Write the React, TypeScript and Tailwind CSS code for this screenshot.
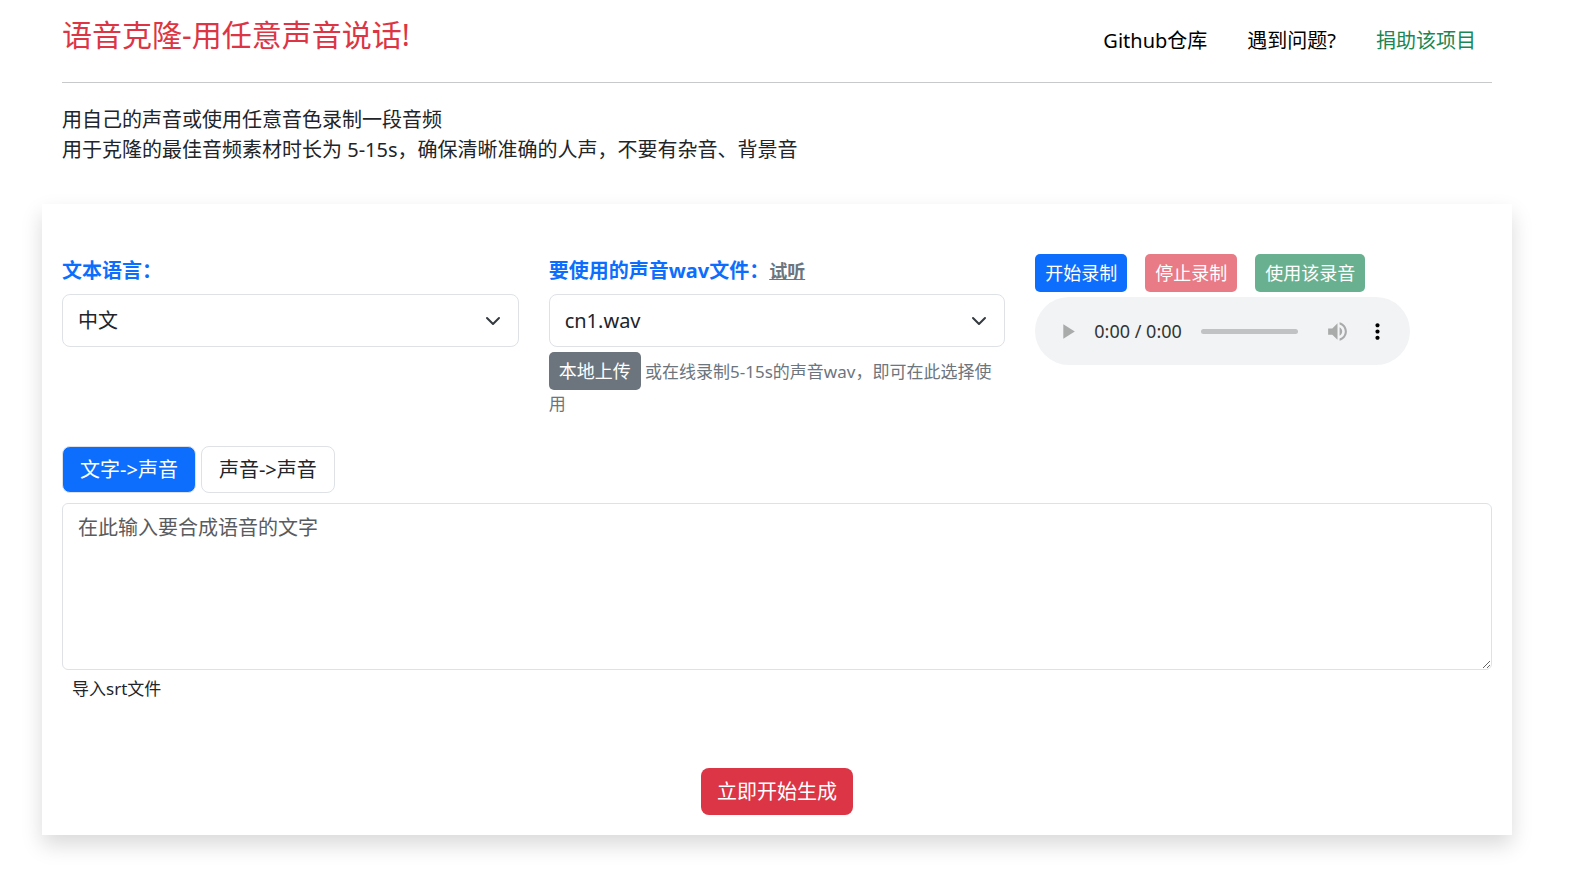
import { useState, ReactNode } from 'react';

interface SmallButtonProps {
  color: string;
  disabled?: boolean;
  children: ReactNode;
}

const links = [
  { label: 'Github仓库', color: 'text-black' },
  { label: '遇到问题?', color: 'text-black' },
  { label: '捐助该项目', color: 'text-[#198754]' },
];

const modes = [
  { id: 'tts', label: '文字->声音' },
  { id: 'sts', label: '声音->声音' },
];

const SmallButton = ({ color, disabled, children }: SmallButtonProps) => (
  <button
    type="button"
    disabled={disabled}
    className={`inline-block h-[38px] rounded-[5px] px-[10px] text-lg leading-[38px] text-white disabled:opacity-65 ${color}`}
  >
    {children}
  </button>
);

const Chevron = () => (
  <svg
    viewBox="0 0 16 16"
    className="pointer-events-none absolute top-1/2 right-[18px] size-4 -translate-y-1/2"
    fill="none"
    stroke="#343a40"
    strokeWidth="2"
    strokeLinecap="round"
    strokeLinejoin="round"
  >
    <path d="m2 5 6 6 6-6" />
  </svg>
);

const SelectField = ({ id, options }: { id: string; options: string[] }) => (
  <div className="relative">
    <select
      id={id}
      className="block h-[53px] w-full appearance-none rounded-lg border border-[#dee2e6] bg-white pr-12 pl-[15px] text-xl focus:outline-none focus:ring-4 focus:ring-[#0d6efd]/25"
    >
      {options.map((option) => (
        <option key={option}>{option}</option>
      ))}
    </select>
    <Chevron />
  </div>
);

const AudioPlayer = () => (
  <div className="mt-[5px] flex h-[68px] w-[375px] max-w-full items-center rounded-full bg-[#f1f3f4] pl-5">
    <button type="button" disabled aria-label="播放" className="text-[#a9aaaa]">
      <svg viewBox="0 0 24 24" className="size-[25px]" fill="currentColor">
        <path d="M8 5v14l11-7z" />
      </svg>
    </button>
    <span className="ml-[14px] w-[90px] whitespace-nowrap text-lg text-[#333]">0:00 / 0:00</span>
    <input
      type="range"
      disabled
      defaultValue={0}
      aria-label="进度"
      className="ml-[17px] h-[5px] w-[97px] appearance-none rounded-full bg-[#c1c2c3] [&::-webkit-slider-thumb]:appearance-none"
    />
    <button type="button" disabled aria-label="静音" className="ml-[27px] text-[#a9aaaa]">
      <svg viewBox="0 0 24 24" className="size-[25px]" fill="currentColor">
        <path d="M3 9v6h4l5 5V4L7 9H3zm13.5 3c0-1.77-1.02-3.29-2.5-4.03v8.05c1.48-.73 2.5-2.25 2.5-4.02zM14 3.23v2.06c2.89.86 5 3.54 5 6.71s-2.11 5.85-5 6.71v2.06c4.01-.91 7-4.49 7-8.77s-2.99-7.86-7-8.77z" />
      </svg>
    </button>
    <button type="button" aria-label="更多" className="ml-[15px] text-black">
      <svg viewBox="0 0 24 24" className="size-[25px]" fill="currentColor">
        <path d="M12 8c1.1 0 2-.9 2-2s-.9-2-2-2-2 .9-2 2 .9 2 2 2zm0 2c-1.1 0-2 .9-2 2s.9 2 2 2 2-.9 2-2-.9-2-2-2zm0 6c-1.1 0-2 .9-2 2s.9 2 2 2 2-.9 2-2-.9-2-2-2z" />
      </svg>
    </button>
  </div>
);

export default function App() {
  const [mode, setMode] = useState('tts');
  const [text, setText] = useState('');

  return (
    <div className="min-h-screen bg-white pr-[71px] pb-[35px] pl-[42px] font-['Noto_Sans','Noto_Sans_CJK_SC',sans-serif] text-xl text-[#212529]">
      <div className="px-5">
        <header className="flex h-[83px] items-start justify-between border-b border-[#c8c9ca]">
          <h1 className="mt-3 text-3xl leading-[45px] text-[#dc3545]">语音克隆-用任意声音说话!</h1>
          <nav className="mt-[26px] flex gap-10 pr-4 leading-[30px]">
            {links.map((link) => (
              <a key={link.label} href="#" className={link.color}>
                {link.label}
              </a>
            ))}
          </nav>
        </header>

        <p className="pt-[22px] leading-[30px]">
          用自己的声音或使用任意音色录制一段音频
          <br />
          用于克隆的最佳音频素材时长为 5-15s，确保清晰准确的人声，不要有杂音、背景音
        </p>
      </div>

      <main className="mt-[39px] bg-white px-5 pt-[50px] pb-5 shadow-[0_10px_20px_rgba(0,0,0,0.15)]">
        <div className="grid grid-cols-3 gap-x-[30px]">
          <div>
            <label htmlFor="language" className="block h-10 leading-[34px] font-bold text-[#0d6efd]">
              文本语言：
            </label>
            <SelectField id="language" options={['中文', 'English', '日本語']} />
          </div>

          <div>
            <div className="h-10 leading-[34px] font-bold">
              <label htmlFor="voice" className="text-[#0d6efd]">
                要使用的声音wav文件：
              </label>
              <a href="#" className="text-lg leading-[34px] text-[#6c757d] underline">
                试听
              </a>
            </div>
            <SelectField id="voice" options={['cn1.wav']} />
            <div className="mt-[5px] text-[17px] leading-[27px] text-[#6c757d]">
              <SmallButton color="bg-[#6c757d]">本地上传</SmallButton>{' '}
              或在线录制5-15s的声音wav，即可在此选择使用
            </div>
          </div>

          <div>
            <div className="flex gap-[18px]">
              <SmallButton color="bg-[#0d6efd]">开始录制</SmallButton>
              <SmallButton color="bg-[#dc3545]" disabled>
                停止录制
              </SmallButton>
              <SmallButton color="bg-[#198754]" disabled>
                使用该录音
              </SmallButton>
            </div>
            <AudioPlayer />
          </div>
        </div>

        <div className="mt-[29px] flex gap-[5px]">
          {modes.map((item) => (
            <button
              key={item.id}
              type="button"
              onClick={() => setMode(item.id)}
              className={`h-[47px] rounded-lg border border-[#dee2e6] px-[17px] pt-px ${
                mode === item.id ? 'bg-[#0d6efd] text-white' : 'bg-white'
              }`}
            >
              {item.label}
            </button>
          ))}
        </div>

        <textarea
          aria-label="在此输入要合成语音的文字"
          placeholder="在此输入要合成语音的文字"
          value={text}
          onChange={(e) => setText(e.target.value)}
          className="mt-[10px] block h-[167px] w-full rounded-md border border-[#dee2e6] px-[15px] py-[9px] leading-[30px] placeholder:text-[#595c5f] focus:outline-none focus:ring-4 focus:ring-[#0d6efd]/25"
        />
        <button type="button" className="block h-[38px] px-[10px] text-[17px]">
          导入srt文件
        </button>

        <div className="mt-[60px] text-center">
          <button type="button" className="h-[47px] rounded-lg bg-[#dc3545] px-4 pt-px text-white">
            立即开始生成
          </button>
        </div>
      </main>
    </div>
  );
}
